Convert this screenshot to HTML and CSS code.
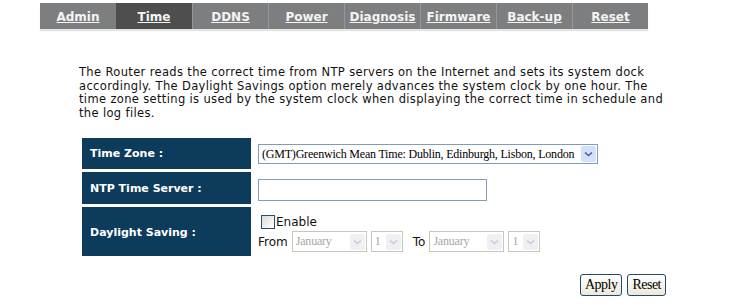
FILE: index.html
```
<!DOCTYPE html>
<html>
<head>
<meta charset="utf-8">
<link rel="stylesheet" href="styles.css">
</head>
<body>
<div class="page">
  <nav class="tabs">
    <a class="tab">Admin</a>
    <a class="tab active">Time</a>
    <a class="tab sep">DDNS</a>
    <a class="tab sep">Power</a>
    <a class="tab sep">Diagnosis</a>
    <a class="tab sep">Firmware</a>
    <a class="tab sep">Back-up</a>
    <a class="tab sep">Reset</a>
  </nav>
  <p class="intro">The Router reads the correct time from NTP servers on the Internet and sets its system dock accordingly. The Daylight Savings option merely advances the system clock by one hour. The time zone setting is used by the system clock when displaying the correct time in schedule and the log files.</p>
  <div class="form">
    <div class="label r1">Time Zone :</div>
    <div class="value r1">
      <div class="select tz"><span class="sel-text">(GMT)Greenwich Mean Time: Dublin, Edinburgh, Lisbon, London</span><span class="arrow"><svg width="9" height="6" viewBox="0 0 9 6"><path d="M1 1.5 L4.5 4.5 L8 1.5" fill="none" stroke="#4d6185" stroke-width="1.6"/></svg></span></div>
    </div>
    <div class="label r2">NTP Time Server :</div>
    <div class="value r2"><div class="textbox"></div></div>
    <div class="label r3">Daylight Saving :</div>
    <div class="value r3">
      <div class="line first"><span class="check"></span><span class="vtext">Enable</span></div>
      <div class="line">
        <span class="vtext">From</span>
        <div class="select dis month"><span class="sel-text">January</span><span class="arrow"><svg width="9" height="6" viewBox="0 0 9 6"><path d="M1 1.5 L4.5 4.5 L8 1.5" fill="none" stroke="#c8ccd4" stroke-width="1.6"/></svg></span></div>
        <div class="select dis day"><span class="sel-text">1</span><span class="arrow"><svg width="9" height="6" viewBox="0 0 9 6"><path d="M1 1.5 L4.5 4.5 L8 1.5" fill="none" stroke="#c8ccd4" stroke-width="1.6"/></svg></span></div>
        <span class="vtext to">To</span>
        <div class="select dis month"><span class="sel-text">January</span><span class="arrow"><svg width="9" height="6" viewBox="0 0 9 6"><path d="M1 1.5 L4.5 4.5 L8 1.5" fill="none" stroke="#c8ccd4" stroke-width="1.6"/></svg></span></div>
        <div class="select dis day"><span class="sel-text">1</span><span class="arrow"><svg width="9" height="6" viewBox="0 0 9 6"><path d="M1 1.5 L4.5 4.5 L8 1.5" fill="none" stroke="#c8ccd4" stroke-width="1.6"/></svg></span></div>
      </div>
    </div>
  </div>
  <div class="buttons">
    <button class="btn">Apply</button>
    <button class="btn">Reset</button>
  </div>
</div>
</body>
</html>
```
FILE: styles.css
```
html, body {
  margin: 0;
  padding: 0;
  background: #ffffff;
}
.page {
  padding: 3px 0 0 40px;
  width: 626px;
  font-family: "DejaVu Sans", Verdana, sans-serif;
}
.tabs {
  display: flex;
  width: 608px;
  height: 26px;
  background: #7c7e80;
  box-shadow: 0 2px 1px #e4e4e4;
}
.tab {
  width: 76px;
  display: flex;
  align-items: center;
  justify-content: center;
  color: #f4f4f4;
  font-weight: bold;
  font-size: 12px;
  text-decoration: underline;
  box-sizing: border-box;
  padding-top: 2px;
}
.tab.active {
  background: #4e4e4e;
}
.tab.sep {
  border-left: 1px solid #95979a;
}
.intro {
  margin: 37px 0 0 39px;
  width: 592px;
  font-size: 11.5px;
  letter-spacing: 0.35px;
  line-height: 13.5px;
  color: #111111;
}
.form {
  display: grid;
  grid-template-columns: 169px 1fr;
  grid-template-rows: 31px 32px 49px;
  row-gap: 3px;
  margin: 18px 0 0 42px;
  width: 560px;
}
.label {
  background: #0d3b5c;
  color: #ffffff;
  font-weight: bold;
  font-size: 11px;
  display: flex;
  align-items: center;
  padding-left: 8px;
}
.label.r3 {
  padding-top: 2px;
}
.value {
  display: flex;
  flex-direction: column;
  justify-content: center;
  padding-left: 7px;
}
.value.r3 {
  justify-content: flex-start;
  padding-top: 8px;
}
.select {
  display: flex;
  align-items: center;
  box-sizing: border-box;
  border: 1px solid #7f9db9;
  background: #ffffff;
  height: 20px;
  font-family: "Liberation Serif", "DejaVu Serif", serif;
  font-size: 12px;
  color: #000;
  padding-left: 3px;
  letter-spacing: -0.2px;
}
.select .sel-text {
  flex: 1;
  white-space: nowrap;
  overflow: hidden;
}
.select .arrow {
  width: 15px;
  height: 16px;
  margin-right: 1px;
  background: #d3e0fb;
  border-radius: 2px;
  display: flex;
  align-items: center;
  justify-content: center;
}
.select.tz {
  width: 340px;
  margin-top: 1px;
}
.textbox {
  width: 229px;
  height: 22px;
  box-sizing: border-box;
  border: 1px solid #7f9db9;
  margin-top: 3px;
}
.line {
  display: flex;
  align-items: center;
  gap: 4px;
}
.line.first {
  height: 14px;
}
.line + .line {
  margin-top: 2px;
}
.vtext {
  font-size: 12px;
  color: #111;
}
.check {
  width: 12px;
  height: 12px;
  border: 1px solid #1c5180;
  background: linear-gradient(135deg, #dcdcd6, #ffffff);
  margin-left: 3px;
  margin-right: -3px;
}
.select.dis {
  border-color: #c9c7ba;
  color: #a6a6a6;
  height: 21px;
}
.select.dis .arrow {
  background: #eef0f4;
}
.select.month {
  width: 75px;
}
.select.day {
  width: 32px;
}
.to {
  margin-left: 6px;
}
.buttons {
  display: flex;
  justify-content: flex-end;
  gap: 5px;
  margin-top: 18px;
}
.btn {
  font-family: "Liberation Serif", "DejaVu Serif", serif;
  font-size: 14px;
  height: 22px;
  padding: 0 4px;
  border: 1px solid #1f4a6e;
  border-radius: 3px;
  background: linear-gradient(#ffffff, #ece9d8);
  color: #000;
  letter-spacing: -0.5px;
}
```
